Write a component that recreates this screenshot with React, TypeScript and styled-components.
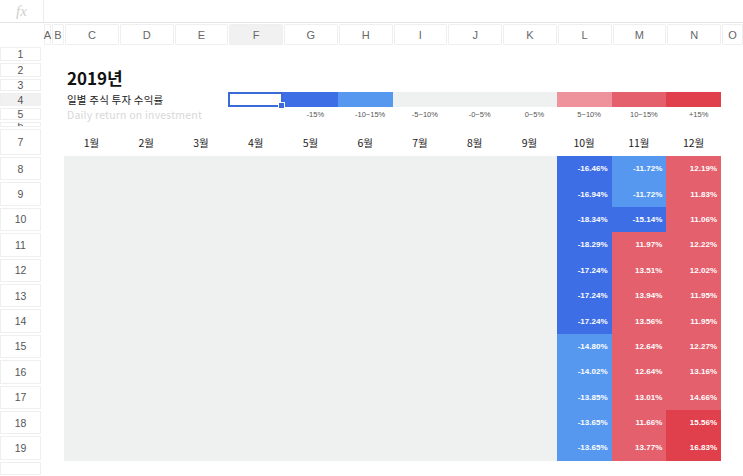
import React from "react";
import styled, { createGlobalStyle } from "styled-components";

const G = createGlobalStyle`
  body { margin: 0; background: #fff; font-family: "Noto Sans CJK KR", "Liberation Sans", sans-serif; overflow: hidden; }
`;

const FormulaBar = styled.div`
  height: 22px; display: flex; border-bottom: 1px solid #e6e6e6;
`;
const Fx = styled.div`
  width: 43px; display: flex; align-items: center; justify-content: center;
  font-family: "Liberation Serif", serif; font-style: italic; color: #cfcfcf; font-size: 15px;
  border-right: 1px solid #ececec;
`;
const Sheet = styled.div`
  display: grid;
  grid-template-columns: 43px 8px 13px repeat(12, 54.75px) 22px;
  grid-template-rows: 23px 16px 16px 14px 15px 14px 7px 28px repeat(12, 25.4px) 15px;
`;
const ColHead = styled.div<{ $sel?: boolean }>`
  display: flex; align-items: center; justify-content: center;
  font-family: "Liberation Sans", sans-serif; font-size: 11px; color: #666;
  background: ${p => (p.$sel ? "#f1f1f1" : "#fff")};
  border: 1px solid #efefef; margin: 1px 0 1px 1px; border-radius: 1px;
`;
const RowHead = styled.div<{ $sel?: boolean }>`
  display: flex; align-items: center; justify-content: center;
  font-family: "Liberation Sans", sans-serif; font-size: 10.5px; color: #555;
  background: ${p => (p.$sel ? "#f1f1f1" : "#fff")};
  border: 1px solid #efefef; margin: 1px 2px 1px 0; overflow: hidden;
`;
const Cell = styled.div<{ $bg?: string; $c?: string; $col: number; $row: number; $span?: number }>`
  grid-column: ${p => p.$col} / span ${p => p.$span ?? 1};
  grid-row: ${p => p.$row};
  background: ${p => p.$bg ?? "transparent"};
  color: ${p => p.$c ?? "#222"};
  display: flex; align-items: center; justify-content: flex-end;
  padding-right: 4px; font-family: "Liberation Sans", sans-serif; font-size: 8px; font-weight: bold;
`;
const Title = styled.div`
  grid-column: 4 / span 3; grid-row: 3 / span 2; align-self: center;
  font-family: "Noto Sans CJK KR", sans-serif; font-size: 17px; font-weight: bold; color: #111;
  padding-left: 3px;
`;
const Sub = styled.div<{ $row: number; $c: string }>`
  grid-column: 4 / span 3; grid-row: ${p => p.$row}; display: flex; align-items: center;
  font-family: "Noto Sans CJK KR", sans-serif; font-size: 10.5px; color: ${p => p.$c}; padding-left: 3px;
  white-space: nowrap; letter-spacing: 0.2px;
`;
const Legend = styled.div<{ $col: number }>`
  grid-column: ${p => p.$col}; grid-row: 6; display: flex; align-items: center; justify-content: center;
  font-family: "Liberation Sans", sans-serif; font-size: 7.5px; color: #555; padding-left: 10px;
`;
const Month = styled.div<{ $col: number }>`
  grid-column: ${p => p.$col}; grid-row: 8; display: flex; align-items: center; justify-content: center;
  font-family: "Noto Sans CJK KR", sans-serif; font-size: 10.5px; color: #222;
`;
const SelCell = styled.div`
  grid-column: 7; grid-row: 5; border: 2px solid #3a6bd8; position: relative; background: #fff;
`;
const Handle = styled.span`
  position: absolute; right: -4px; bottom: -4px; width: 5px; height: 5px; background: #3a6bd8; border: 1px solid #fff;
`;
const GrayBlock = styled.div`
  grid-column: 4 / span 9; grid-row: 9 / span 12; background: #eff0f0;
`;

const DB = "#3d6ee6", LB = "#5698ef", R = "#e4606d", DR = "#e0404b";
const cols = ["A", "B", "C", "D", "E", "F", "G", "H", "I", "J", "K", "L", "M", "N", "O"];
const rows = ["1", "2", "3", "4", "5", "6", "7", "8", "9", "10", "11", "12", "13", "14", "15", "16", "17", "18", "19", ""];
const L = ["-16.46%", "-16.94%", "-18.34%", "-18.29%", "-17.24%", "-17.24%", "-17.24%", "-14.80%", "-14.02%", "-13.85%", "-13.65%", "-13.65%"];
const M = ["-11.72%", "-11.72%", "-15.14%", "11.97%", "13.51%", "13.94%", "13.56%", "12.64%", "12.64%", "13.01%", "11.66%", "13.77%"];
const N = ["12.19%", "11.83%", "11.06%", "12.22%", "12.02%", "11.95%", "11.95%", "12.27%", "13.16%", "14.66%", "15.56%", "16.83%"];
const legend = [["-15%", 8], ["-10~15%", 9], ["-5~10%", 10], ["-0~5%", 11], ["0~5%", 12], ["5~10%", 13], ["10~15%", 14], ["+15%", 15]] as const;

export default function App() {
  return (
    <>
      <G />
      <FormulaBar><Fx>fx</Fx></FormulaBar>
      <Sheet>
        <div />
        {cols.map((c, i) => <ColHead key={c} $sel={c === "F"} style={{ gridColumn: i + 2, gridRow: 1 }}>{c}</ColHead>)}
        {rows.map((r, i) => <RowHead key={i} $sel={r === "4"} style={{ gridColumn: 1, gridRow: i + 2 }}>{r}</RowHead>)}
        <Title>2019년</Title>
        <Sub $row={5} $c="#222">일별 주식 투자 수익률</Sub>
        <Sub $row={6} $c="#d8d8d8">Daily return on investment</Sub>
        <SelCell><Handle /></SelCell>
        <Cell $col={8} $row={5} $bg={DB} />
        <Cell $col={9} $row={5} $bg={LB} />
        <Cell $col={10} $row={5} $span={3} $bg="#eff0f0" />
        <Cell $col={13} $row={5} $bg="#ee939c" />
        <Cell $col={14} $row={5} $bg={R} />
        <Cell $col={15} $row={5} $bg={DR} />
        {legend.map(([t, c]) => <Legend key={t} $col={c}>{t}</Legend>)}
        {Array.from({ length: 12 }, (_, i) => <Month key={i} $col={i + 4}>{i + 1}월</Month>)}
        <GrayBlock />
        {L.map((v, i) => <Cell key={"l" + i} $col={13} $row={9 + i} $bg={i < 7 ? DB : LB} $c="#fff">{v}</Cell>)}
        {M.map((v, i) => <Cell key={"m" + i} $col={14} $row={9 + i} $bg={i < 2 ? LB : i === 2 ? DB : R} $c="#fff">{v}</Cell>)}
        {N.map((v, i) => <Cell key={"n" + i} $col={15} $row={9 + i} $bg={i >= 10 ? DR : R} $c="#fff">{v}</Cell>)}
      </Sheet>
    </>
  );
}
